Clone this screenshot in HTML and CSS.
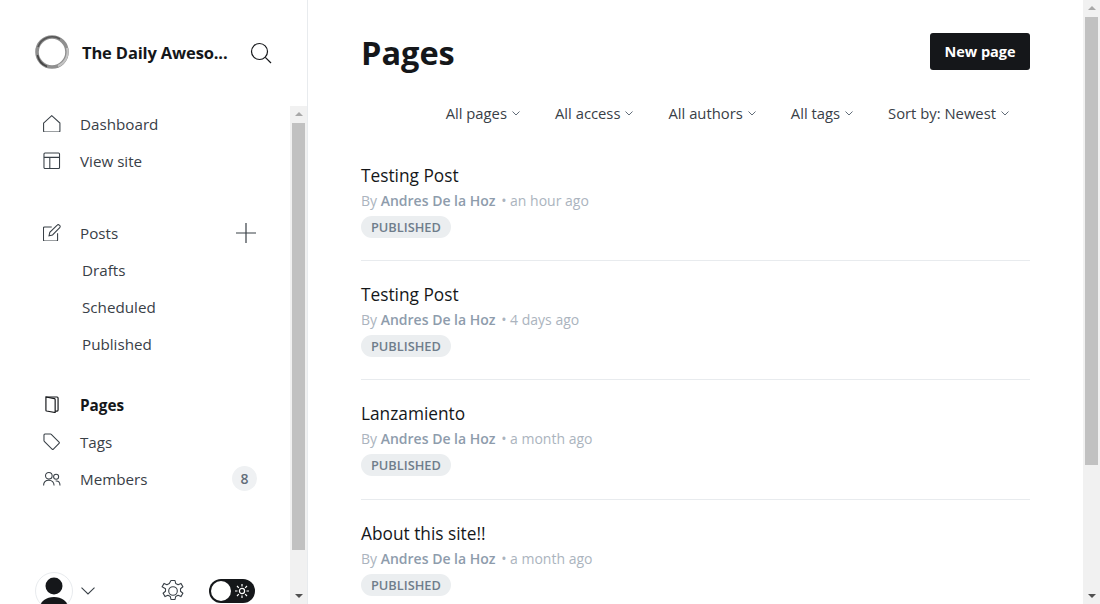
FILE: index.html
```html
<!DOCTYPE html>
<html>
  <head>
    <title>Pages</title>
    <link rel="stylesheet" href="styles.css">
  </head>
  <body>
    <div class="app">
      <aside class="sidebar">
        <div class="brand">
          <svg class="logo" width="36" height="36" viewBox="0 0 36 36" fill="none">
            <circle cx="18" cy="18" r="15" stroke="#8f8f8f" stroke-width="3.600"/>
            <path d="M4 13A15 15 0 0 1 26 5" stroke="#555" stroke-width="1.600"/>
            <path d="M3.500 21A15 15 0 0 0 13 32.500" stroke="#444" stroke-width="1.600"/>
            <path d="M33 14A15 15 0 0 1 24 32" stroke="#c4c4c4" stroke-width="2"/>
          </svg>
          <span class="brand-name">The Daily Aweso...</span>
          <svg class="search" width="22" height="22" viewBox="0 0 22 22" fill="none" stroke="#15171a" stroke-width="1.200">
            <circle cx="9.500" cy="9.500" r="8"/>
            <path d="M15.300 15.300L21 21"/>
          </svg>
        </div>
        <div class="sidebar-body">
          <div class="sidebar-content">
            <nav class="nav">
              <ul class="nav-group">
                <li class="nav-item">
                  <svg class="nav-icon" viewBox="0 0 18 18" fill="none" stroke="#394047" stroke-width="1.100">
                    <path d="M.6 8.300L9 .7l8.400 7.600v8.200a.9.900 0 0 1-.9.900h-15a.9.900 0 0 1-.9-.9z"/>
                  </svg>
                  <span>Dashboard</span>
                </li>
                <li class="nav-item">
                  <svg class="nav-icon" viewBox="0 0 18 18" fill="none" stroke="#394047" stroke-width="1.100">
                    <rect x="1" y="1" width="16" height="16" rx="1"/>
                    <path d="M1 5.500h16M7 5.500V17"/>
                  </svg>
                  <span>View site</span>
                </li>
              </ul>
              <ul class="nav-group">
                <li class="nav-item">
                  <svg class="nav-icon" viewBox="0 0 18 18" fill="none" stroke="#394047" stroke-width="1.100">
                    <path d="M9 3H1.500a1 1 0 0 0-1 1v12.500a1 1 0 0 0 1 1H14a1 1 0 0 0 1-1V9.500"/>
                    <path d="M7 8.500l-.8 3.600 3.600-.8 7.400-7.600a1.500 1.500 0 0 0 0-2.200l-.4-.4a1.500 1.500 0 0 0-2.200 0z"/>
                  </svg>
                  <span>Posts</span>
                  <svg class="nav-plus" width="20" height="20" viewBox="0 0 20 20" fill="none" stroke="#394047" stroke-width="1.200">
                    <path d="M10 0v20M0 10h20"/>
                  </svg>
                </li>
                <li class="nav-item nav-sub">Drafts</li>
                <li class="nav-item nav-sub">Scheduled</li>
                <li class="nav-item nav-sub">Published</li>
              </ul>
              <ul class="nav-group">
                <li class="nav-item nav-active">
                  <svg class="nav-icon" viewBox="0 0 18 18" fill="none" stroke="#15171a" stroke-width="1.200">
                    <path d="M3 1h11.500a1 1 0 0 1 1 1v12.500a1 1 0 0 1-1 1h-2"/>
                    <path d="M3 1l8.800 1.700a.9.900 0 0 1 .7.900V17l-8.800-1.600a.9.900 0 0 1-.7-.9z"/>
                  </svg>
                  <span>Pages</span>
                </li>
                <li class="nav-item">
                  <svg class="nav-icon" viewBox="0 0 18 18" fill="none" stroke="#394047" stroke-width="1.100">
                    <path d="M1 2a1 1 0 0 1 1-1h5.800a1 1 0 0 1 .7.300l8 8a1 1 0 0 1 0 1.400l-5.800 5.800a1 1 0 0 1-1.400 0l-8-8a1 1 0 0 1-.3-.7z"/>
                  </svg>
                  <span>Tags</span>
                </li>
                <li class="nav-item">
                  <svg class="nav-icon" viewBox="0 0 18 18" fill="none" stroke="#394047" stroke-width="1.100">
                    <circle cx="6" cy="6" r="3.400"/>
                    <path d="M.6 16c0-3.600 2.200-5.500 5.400-5.500s5.400 1.900 5.400 5.500"/>
                    <circle cx="13.500" cy="7" r="2.600"/>
                    <path d="M13 11.300c2.900-.4 4.500 1.300 4.500 4.700"/>
                  </svg>
                  <span>Members</span>
                  <span class="nav-count">8</span>
                </li>
              </ul>
            </nav>
            <div class="sidebar-foot">
              <div class="avatar">
                <svg width="38" height="38" viewBox="0 0 38 38" fill="#15171a">
                  <circle cx="19" cy="14" r="8.500"/>
                  <ellipse cx="19" cy="35" rx="14" ry="10"/>
                </svg>
              </div>
              <svg class="foot-caret" width="14" height="8" viewBox="0 0 14 8" fill="none" stroke="#394047" stroke-width="1.100">
                <path d="M.5.700L7 7l6.500-6.300"/>
              </svg>
              <svg class="foot-gear" width="24" height="24" viewBox="0 0 24 24" fill="none" stroke="#394047" stroke-width="1.100" stroke-linejoin="round">
                <circle cx="12" cy="12" r="4.300"/>
                <path d="M10 1.500h4l.7 3 2.400 1.200 2.800-1.300 2 3.400-2.400 1.900v2.600l2.400 1.900-2 3.400-2.800-1.300-2.400 1.200-.7 3h-4l-.7-3-2.400-1.200-2.800 1.300-2-3.400 2.400-1.900V9.700L1.100 7.800l2-3.400 2.800 1.300 2.400-1.200z"/>
              </svg>
              <div class="theme-toggle">
                <span class="theme-knob"></span>
                <svg width="14" height="14" viewBox="0 0 14 14" fill="none" stroke="#fff" stroke-width="1.200">
                  <circle cx="7" cy="7" r="2.600"/>
                  <path d="M7 0v2.500M7 11.500V14M0 7h2.500M11.500 7H14M2 2l1.800 1.800M10.200 10.200L12 12M2 12l1.800-1.800M10.200 3.800L12 2"/>
                </svg>
              </div>
            </div>
          </div>
          <div class="scrollbar">
            <span class="arrow-up"></span>
            <span class="thumb thumb-side"></span>
            <span class="arrow-down"></span>
          </div>
        </div>
      </aside>

      <main class="main">
        <header class="main-head">
          <h1>Pages</h1>
          <button class="new-btn">New page</button>
        </header>
        <div class="filters">
          <span class="filter">All pages<svg width="8" height="5" viewBox="0 0 8 5" fill="none" stroke="#626d79"><path d="M.5.500L4 4 7.500.5"/></svg></span>
          <span class="filter">All access<svg width="8" height="5" viewBox="0 0 8 5" fill="none" stroke="#626d79"><path d="M.5.500L4 4 7.500.5"/></svg></span>
          <span class="filter">All authors<svg width="8" height="5" viewBox="0 0 8 5" fill="none" stroke="#626d79"><path d="M.5.500L4 4 7.500.5"/></svg></span>
          <span class="filter">All tags<svg width="8" height="5" viewBox="0 0 8 5" fill="none" stroke="#626d79"><path d="M.5.500L4 4 7.500.5"/></svg></span>
          <span class="filter">Sort by: Newest<svg width="8" height="5" viewBox="0 0 8 5" fill="none" stroke="#626d79"><path d="M.5.500L4 4 7.500.5"/></svg></span>
        </div>
        <ul class="page-list">
          <li class="page-row">
            <h3>Testing Post</h3>
            <p class="meta">By <b>Andres De la Hoz</b> • an hour ago</p>
            <span class="status">PUBLISHED</span>
          </li>
          <li class="page-row">
            <h3>Testing Post</h3>
            <p class="meta">By <b>Andres De la Hoz</b> • 4 days ago</p>
            <span class="status">PUBLISHED</span>
          </li>
          <li class="page-row">
            <h3>Lanzamiento</h3>
            <p class="meta">By <b>Andres De la Hoz</b> • a month ago</p>
            <span class="status">PUBLISHED</span>
          </li>
          <li class="page-row">
            <h3>About this site!!</h3>
            <p class="meta">By <b>Andres De la Hoz</b> • a month ago</p>
            <span class="status">PUBLISHED</span>
          </li>
        </ul>
      </main>

      <div class="scrollbar">
        <span class="arrow-up"></span>
        <span class="thumb thumb-main"></span>
        <span class="arrow-down"></span>
      </div>
    </div>
  </body>
</html>
```

FILE: styles.css
```css
* {
  box-sizing: border-box;
}

html, body {
  margin: 0;
  height: 100%;
  overflow: hidden;
}

body {
  font-family: "Open Sans", "Noto Sans", sans-serif;
  color: #15171a;
  background: #fff;
}

ul {
  list-style: none;
  margin: 0;
  padding: 0;
}

.app {
  display: grid;
  grid-template-columns: 308px 1fr 17px;
  height: 100vh;
}

/* sidebar */
.sidebar {
  display: flex;
  flex-direction: column;
  min-height: 0;
  border-right: 1px solid #e8ebee;
}

.brand {
  display: flex;
  align-items: center;
  height: 106px;
  padding: 0 35px 2px 34px;
}

.logo {
  flex: none;
  margin-right: 12px;
}

.brand-name {
  flex: 1;
  font-size: 16.500px;
  font-weight: 700;
  white-space: nowrap;
  letter-spacing: -.15px;
}

.search {
  flex: none;
  margin-top: 2px;
}

.sidebar-body {
  display: flex;
  flex: 1;
  min-height: 0;
}

.sidebar-content {
  display: flex;
  flex: 1;
  flex-direction: column;
  min-height: 0;
  overflow: hidden;
  padding-left: 43px;
  padding-right: 33px;
}

.nav {
  margin-top: -1px;
}

.nav-group {
  margin-bottom: 35px;
}

.nav-group:nth-child(2) {
  margin-bottom: 24px;
}

.nav-item {
  display: flex;
  align-items: center;
  height: 37px;
  font-size: 15.200px;
  color: #394047;
}

.nav-icon {
  flex: none;
  width: 17.500px;
  height: 17.500px;
  margin-right: 19.500px;
}

.nav-sub {
  padding-left: 39px;
}

.nav-active {
  color: #15171a;
  font-weight: 700;
  font-size: 15.300px;
}

.nav-plus {
  margin-left: auto;
  margin-right: 1px;
}

.nav-count {
  display: flex;
  align-items: center;
  justify-content: center;
  width: 25px;
  height: 25px;
  margin-left: auto;
  border-radius: 50%;
  background: #eff1f3;
  color: #626d79;
  font-size: 14px;
  font-weight: 600;
}

.sidebar-foot {
  display: flex;
  align-items: center;
  flex: none;
  height: 38px;
  margin-top: auto;
  margin-bottom: -6px;
  margin-left: -8px;
}

.avatar {
  width: 38px;
  height: 38px;
  flex: none;
  overflow: hidden;
  border-radius: 50%;
  border: 1px solid #e8ebee;
}

.avatar svg {
  display: block;
  margin: -1px;
}

.foot-caret {
  margin-left: 8px;
}

.foot-gear {
  margin-left: 66px;
}

.theme-toggle {
  display: flex;
  align-items: center;
  justify-content: flex-end;
  position: relative;
  width: 46px;
  height: 24px;
  margin-left: auto;
  margin-right: 2px;
  padding-right: 6px;
  border-radius: 12px;
  background: #15171a;
}

.theme-knob {
  position: absolute;
  left: 2px;
  top: 2px;
  width: 20px;
  height: 20px;
  border-radius: 50%;
  background: #fff;
}

/* scrollbars */
.scrollbar {
  display: flex;
  flex: none;
  flex-direction: column;
  align-items: center;
  width: 17px;
  background: #f1f1f1;
}

.thumb {
  width: 13px;
  background: #c1c1c1;
}

.thumb-side {
  height: 427px;
}

.thumb-main {
  height: 448px;
}

.arrow-up, .arrow-down {
  flex: none;
  width: 0;
  height: 0;
  border-left: 4px solid transparent;
  border-right: 4px solid transparent;
}

.arrow-up {
  margin: 6px 0 7px;
  border-bottom: 4px solid #a8a8a8;
}

.arrow-down {
  margin: auto 0 6px;
  border-top: 4px solid #505050;
}

/* main */
.main {
  min-width: 0;
  overflow: hidden;
  padding: 0 53px;
}

.main-head {
  display: flex;
  align-items: center;
  justify-content: space-between;
  height: 104px;
}

h1 {
  margin: 1px 0 0;
  font-size: 32.500px;
  font-weight: 700;
}

.new-btn {
  width: 100px;
  height: 37px;
  margin-bottom: 2px;
  border: none;
  border-radius: 3px;
  background: #15171a;
  color: #fff;
  font-family: inherit;
  font-size: 14.500px;
  font-weight: 700;
}

.filters {
  display: flex;
  justify-content: flex-end;
  align-items: center;
  gap: 35px;
  height: 17px;
  padding-right: 21px;
  font-size: 14.800px;
  color: #394047;
}

.filter {
  display: flex;
  align-items: center;
  gap: 5px;
  white-space: nowrap;
}

.filter svg {
  margin-top: 2px;
}

.page-list {
  margin-top: 20.600px;
}

.page-row {
  display: flex;
  flex-direction: column;
  align-items: flex-start;
  height: 119.330px;
  border-bottom: 1px solid #e8ebee;
}

.page-row h3 {
  margin: 0;
  padding-top: 22px;
  font-size: 17.300px;
  line-height: 24px;
  font-weight: 500;
}

.meta {
  margin: 4px 0 0;
  font-size: 14px;
  line-height: 18px;
  color: #abb4be;
}

.meta b {
  margin-right: 2px;
  color: #8e9cac;
  font-weight: 600;
}

.status {
  display: flex;
  align-items: center;
  height: 22px;
  margin-top: 6px;
  padding: 0 10px;
  border-radius: 11px;
  background: #ebeef0;
  color: #6f7d8b;
  font-size: 12.800px;
  font-weight: 600;
}
```
